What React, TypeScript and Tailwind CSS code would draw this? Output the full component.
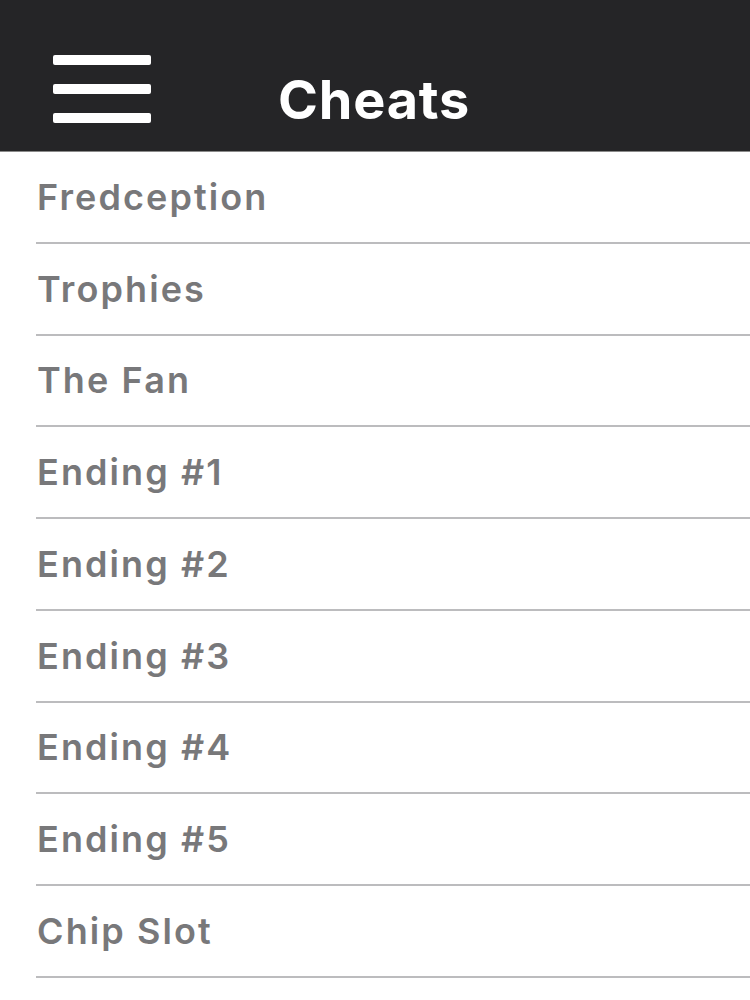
import React from "react";

const items = [
  "Fredception",
  "Trophies",
  "The Fan",
  "Ending #1",
  "Ending #2",
  "Ending #3",
  "Ending #4",
  "Ending #5",
  "Chip Slot",
];

export default function App() {
  return (
    <div className="w-[750px] h-[1000px] overflow-hidden bg-white" style={{ fontFamily: "Inter, 'Liberation Sans', sans-serif" }}>
      <header className="h-[152px] bg-[#252527] flex items-start border-b border-[#8a8a8a]">
        <div className="ml-[53px] mt-[55px] w-[98px] flex flex-col gap-[19px]">
          <div className="h-[10px] bg-white rounded-[2px]" />
          <div className="h-[10px] bg-white rounded-[2px]" />
          <div className="h-[10px] bg-white rounded-[2px]" />
        </div>
        <h1 className="ml-[127px] mt-[73px] text-white font-bold text-[54px] tracking-[0.8px] leading-none">Cheats</h1>
      </header>
      <ul>
        {items.map((t) => (
          <li key={t} className="h-[91.75px] pl-[36px] flex flex-col">
            <div className="flex-1 flex items-center">
              <span className="pl-[1px] text-[#78787a] font-semibold text-[36px] tracking-[2.1px] leading-none">{t}</span>
            </div>
            <div className="h-[2px] bg-[#bcbcbe]" />
          </li>
        ))}
      </ul>
    </div>
  );
}
